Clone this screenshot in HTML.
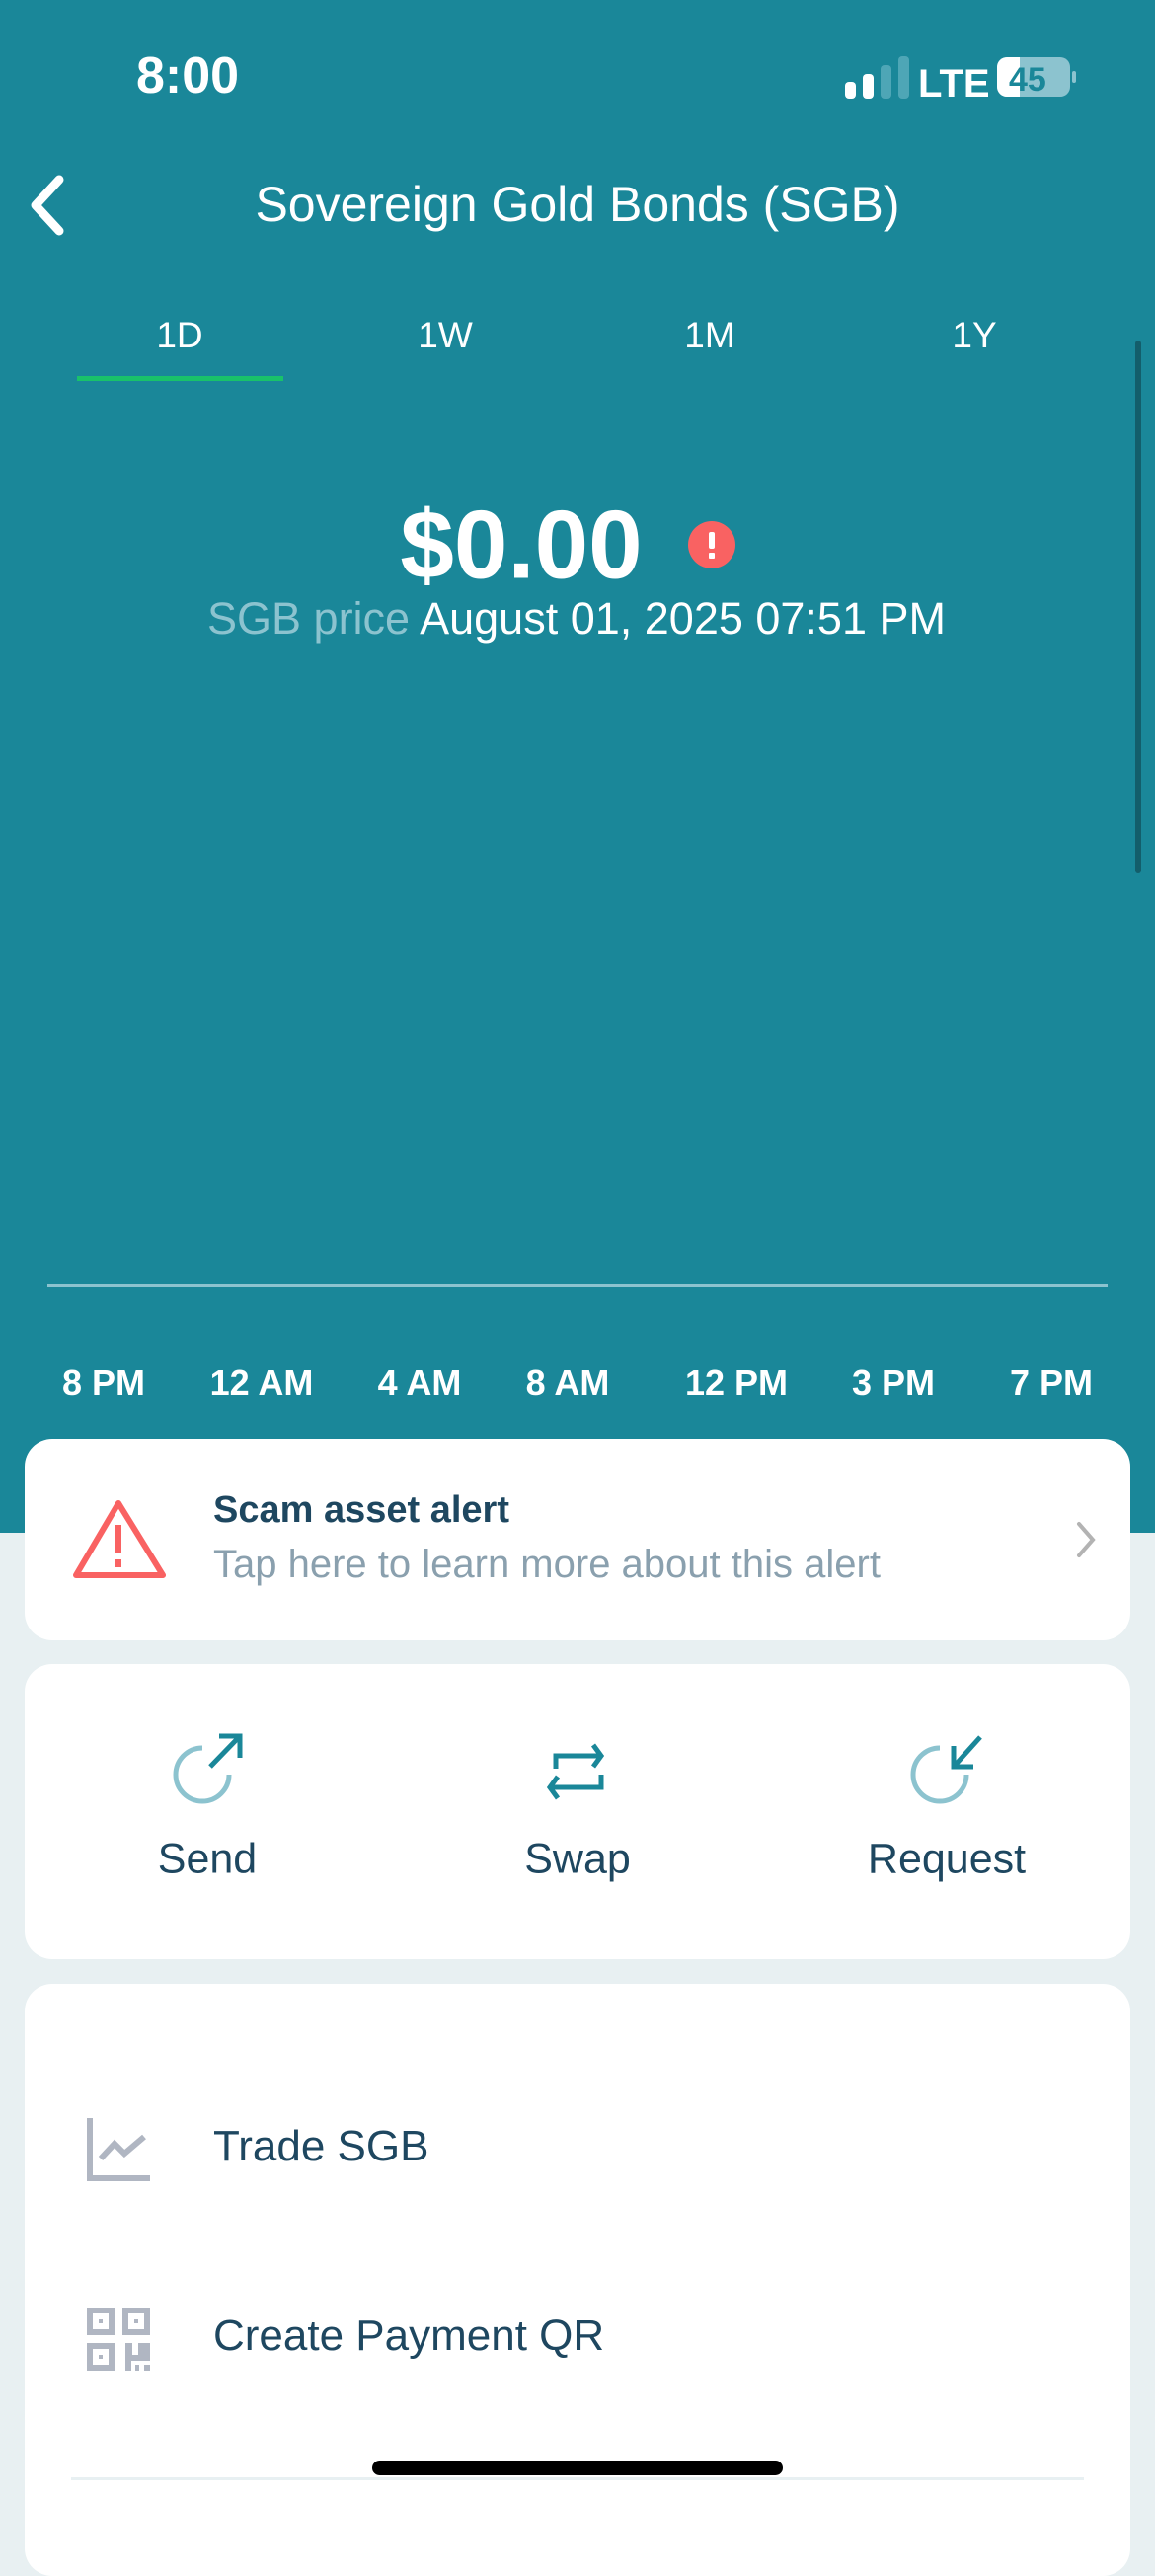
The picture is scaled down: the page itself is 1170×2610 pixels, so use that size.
<!DOCTYPE html>
<html><head><meta charset="utf-8"><style>
*{margin:0;padding:0;box-sizing:border-box}
body{width:1170px;height:2532px;background:#e8f0f2;font-family:"Liberation Sans",sans-serif;position:relative;overflow:hidden}
.abs{position:absolute}
.teal{left:0;top:0;width:1170px;height:1553px;background:#1a8799}
.w{color:#fff}
.card{background:#fff;border-radius:28px;left:25px;width:1120px}
.ctr{transform:translate(-50%,-50%);white-space:nowrap}
.lbl{font-size:36px;font-weight:bold;color:#fff;top:1401px}
.dark{color:#1e4760}
</style></head><body>
<div class="abs teal"></div>
<div class="abs w ctr" style="left:190px;top:77px;font-size:52px;font-weight:bold">8:00</div>
<svg class="abs" style="left:850px;top:55px" width="240" height="50">
<rect x="6" y="28" width="11" height="17" rx="4" fill="#fff"/>
<rect x="24" y="20" width="11" height="25" rx="4" fill="#fff"/>
<rect x="42" y="11" width="11" height="34" rx="4" fill="#4ea6b6"/>
<rect x="60" y="2" width="11" height="43" rx="4" fill="#4ea6b6"/>
<text x="80" y="43" font-family="Liberation Sans" font-weight="bold" font-size="40" fill="#fff">LTE</text>
<rect x="160" y="3" width="74" height="40" rx="10" fill="#8cc3cf"/>
<path d="M170 3 H183 V43 H170 A10 10 0 0 1 160 33 V13 A10 10 0 0 1 170 3Z" fill="#fff"/>
<rect x="236" y="17" width="4" height="12" rx="2" fill="#8cc3cf"/>
<text x="172" y="37" font-family="Liberation Sans" font-weight="bold" font-size="34" fill="#1a8799">45</text>
</svg>
<svg class="abs" style="left:22px;top:176px" width="50" height="64"><path d="M38 6 L14 32 L38 58" stroke="#fff" stroke-width="9" fill="none" stroke-linecap="round" stroke-linejoin="round"/></svg>
<div class="abs w ctr" style="left:585px;top:207px;font-size:50px">Sovereign Gold Bonds (SGB)</div>
<div class="abs w ctr" style="left:182px;top:340px;font-size:37px">1D</div>
<div class="abs w ctr" style="left:451px;top:340px;font-size:37px">1W</div>
<div class="abs w ctr" style="left:719px;top:340px;font-size:37px">1M</div>
<div class="abs w ctr" style="left:987px;top:340px;font-size:37px">1Y</div>
<div class="abs" style="left:78px;top:381px;width:209px;height:5px;background:#19c26a"></div>
<div class="abs" style="left:1150px;top:345px;width:6px;height:540px;border-radius:3px;background:#135e6b"></div>
<div class="abs w ctr" style="left:528px;top:552px;font-size:98px;font-weight:bold">$0.00</div>
<svg class="abs" style="left:697px;top:528px" width="48" height="48"><circle cx="24" cy="24" r="24" fill="#f96262"/><rect x="21" y="11" width="6" height="17" rx="2" fill="#fff"/><rect x="21" y="32" width="6" height="6" rx="1" fill="#fff"/></svg>
<div class="abs ctr" style="left:584px;top:627px;font-size:45px;color:#fff"><span style="color:#8cc3cf">SGB price</span> August 01, 2025 07:51 PM</div>
<div class="abs" style="left:48px;top:1301px;width:1074px;height:3px;background:#8cc3cf"></div>
<div class="abs lbl ctr" style="left:105px">8 PM</div>
<div class="abs lbl ctr" style="left:265px">12 AM</div>
<div class="abs lbl ctr" style="left:425px">4 AM</div>
<div class="abs lbl ctr" style="left:575px">8 AM</div>
<div class="abs lbl ctr" style="left:746px">12 PM</div>
<div class="abs lbl ctr" style="left:905px">3 PM</div>
<div class="abs lbl ctr" style="left:1065px">7 PM</div>

<div class="abs card" style="top:1458px;height:204px"></div>
<svg class="abs" style="left:60px;top:1500px" width="130" height="120"><path d="M60 23 L105 96 L17 96 Z" stroke="#f96262" stroke-width="6" fill="none" stroke-linejoin="round"/><rect x="57" y="45" width="6" height="28" fill="#f96262"/><rect x="57" y="80" width="6" height="8" fill="#f96262"/></svg>
<div class="abs dark" style="left:216px;top:1509px;font-size:38px;font-weight:bold">Scam asset alert</div>
<div class="abs" style="left:216px;top:1563px;font-size:40px;color:#8aa0ae">Tap here to learn more about this alert</div>
<svg class="abs" style="left:1085px;top:1538px" width="30" height="44"><path d="M8 6 L22 22 L8 38" stroke="#b3b3b3" stroke-width="4" fill="none" stroke-linecap="round"/></svg>

<div class="abs card" style="top:1686px;height:299px"></div>
<svg class="abs" style="left:0;top:1740px" width="1170" height="110" fill="none" stroke-width="5">
<path d="M205 31 A27 27 0 1 0 232 58" stroke="#8cc3cf"/>
<path d="M213 50 L243 19 M222 19 H243 V41" stroke="#1a8799"/>
<path d="M563 52 V39 H609 M601 28 L609 39 L601 50" stroke="#1a8799"/>
<path d="M609 58 V71 H557 M565 60 L557 71 L565 82" stroke="#1a8799"/>
<path d="M952 31 A27 27 0 1 0 979 58" stroke="#8cc3cf"/>
<path d="M993 20 L966 50 M966 29 V50 H986" stroke="#1a8799"/>
</svg>
<div class="abs dark ctr" style="left:210px;top:1884px;font-size:43px">Send</div>
<div class="abs dark ctr" style="left:585px;top:1884px;font-size:43px">Swap</div>
<div class="abs dark ctr" style="left:959px;top:1884px;font-size:43px">Request</div>

<div class="abs card" style="top:2010px;height:600px"></div>
<svg class="abs" style="left:60px;top:2130px" width="120" height="290" fill="none" stroke="#b0b6c2" stroke-width="6">
<path d="M31 16 V77 H92"/>
<path d="M42 57 L56 42 L66 52 L86 35"/>
<rect x="31" y="211" width="22" height="22"/><rect x="67" y="211" width="22" height="22"/><rect x="31" y="247" width="22" height="22"/>
<rect x="40" y="220" width="4" height="4" fill="#b0b6c2" stroke="none"/><rect x="76" y="220" width="4" height="4" fill="#b0b6c2" stroke="none"/><rect x="40" y="256" width="4" height="4" fill="#b0b6c2" stroke="none"/>
<path d="M67 244 H74 V256 H80 V244 H92 V262 H67 Z" fill="#b0b6c2" stroke="none"/>
<rect x="67" y="262" width="6" height="10" fill="#b0b6c2" stroke="none"/><rect x="77" y="266" width="4" height="6" fill="#b0b6c2" stroke="none"/><rect x="86" y="266" width="6" height="6" fill="#b0b6c2" stroke="none"/>
</svg>
<div class="abs dark" style="left:216px;top:2150px;font-size:44px">Trade SGB</div>
<div class="abs dark" style="left:216px;top:2342px;font-size:44px">Create Payment QR</div>
<div class="abs" style="left:72px;top:2510px;width:1026px;height:3px;background:#e8f0f2"></div>
<div class="abs" style="left:377px;top:2493px;width:416px;height:15px;border-radius:8px;background:#000"></div>
</body></html>
